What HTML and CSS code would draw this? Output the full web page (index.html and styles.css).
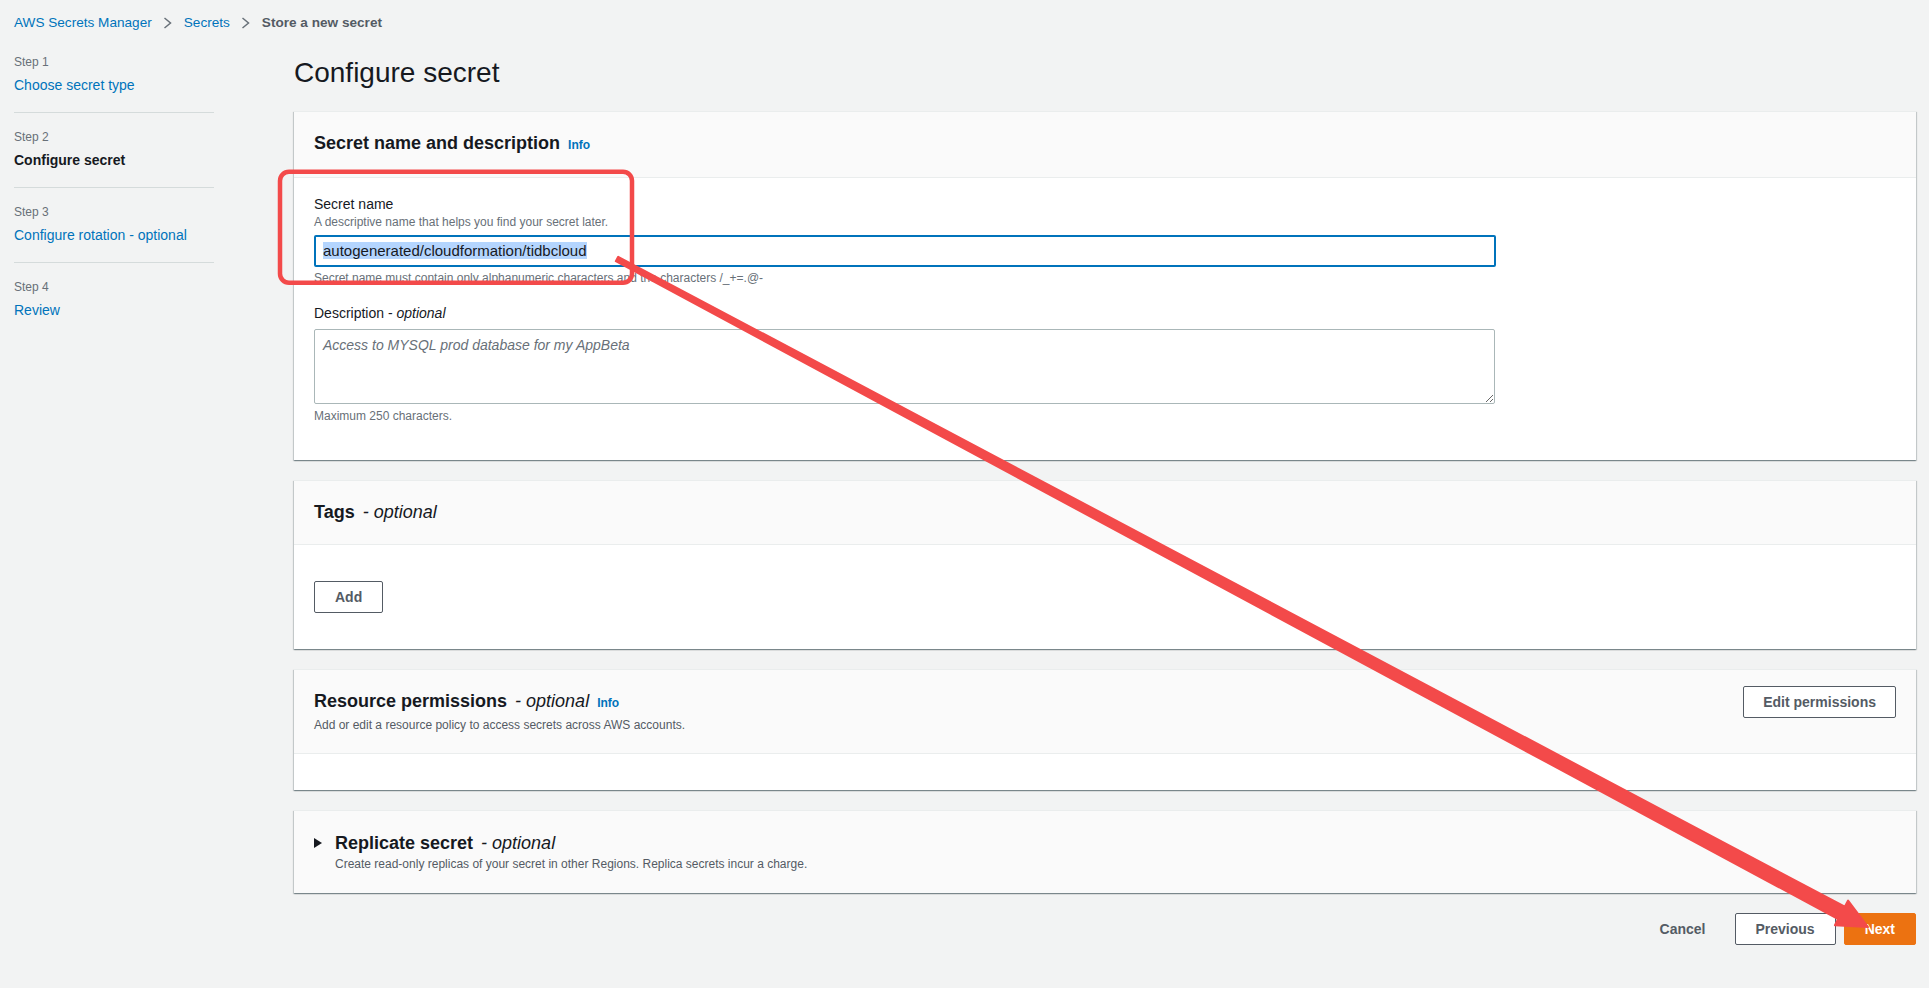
FILE: index.html
```html
<!DOCTYPE html>
<html lang="en">
<head>
  <meta charset="UTF-8">
  <title>Store a new secret</title>
  <link rel="stylesheet" href="styles.css">
</head>
<body>

<nav class="breadcrumbs">
  <a href="#">AWS Secrets Manager</a>
  <svg class="crumb-sep" width="9" height="12" viewBox="0 0 9 12"><path d="M1.5 1 L7.5 6 L1.5 11"/></svg>
  <a href="#">Secrets</a>
  <svg class="crumb-sep" width="9" height="12" viewBox="0 0 9 12"><path d="M1.5 1 L7.5 6 L1.5 11"/></svg>
  <span class="crumb-current">Store a new secret</span>
</nav>

<div class="layout">
  <ol class="steps">
    <li class="step">
      <div class="step-num">Step 1</div>
      <a class="step-title" href="#">Choose secret type</a>
    </li>
    <li class="step">
      <div class="step-num">Step 2</div>
      <span class="step-title current">Configure secret</span>
    </li>
    <li class="step">
      <div class="step-num">Step 3</div>
      <a class="step-title" href="#">Configure rotation - optional</a>
    </li>
    <li class="step">
      <div class="step-num">Step 4</div>
      <a class="step-title" href="#">Review</a>
    </li>
  </ol>

  <main class="content">
    <h1 class="page-title">Configure secret</h1>

    <section class="panel">
      <header class="panel-header">
        <h2 class="panel-title">Secret name and description<a class="info" href="#">Info</a></h2>
      </header>
      <div class="panel-body form-body">
        <div class="field">
          <label class="field-label">Secret name</label>
          <div class="field-desc">A descriptive name that helps you find your secret later.</div>
          <div class="text-input"><span class="selected">autogenerated/cloudformation/tidbcloud</span></div>
          <div class="field-hint">Secret name must contain only alphanumeric characters and the characters /_+=.@-</div>
        </div>
        <div class="field spaced">
          <label class="field-label">Description - <i>optional</i></label>
          <textarea class="textarea" placeholder="Access to MYSQL prod database for my AppBeta"></textarea>
          <div class="field-hint">Maximum 250 characters.</div>
        </div>
      </div>
    </section>

    <section class="panel">
      <header class="panel-header">
        <h2 class="panel-title">Tags<span class="opt">- optional</span></h2>
      </header>
      <div class="panel-body tags-body">
        <button class="btn">Add</button>
      </div>
    </section>

    <section class="panel">
      <header class="panel-header split">
        <div>
          <h2 class="panel-title">Resource permissions<span class="opt">- optional</span><a class="info" href="#">Info</a></h2>
          <div class="panel-sub">Add or edit a resource policy to access secrets across AWS accounts.</div>
        </div>
        <button class="btn header-btn">Edit permissions</button>
      </header>
      <div class="panel-body empty-body"></div>
    </section>

    <section class="panel">
      <header class="panel-header expander">
        <svg class="caret" width="8" height="10" viewBox="0 0 8 10"><path d="M0 0 L8 5 L0 10 Z"/></svg>
        <div>
          <h2 class="panel-title">Replicate secret<span class="opt">- optional</span></h2>
          <div class="panel-sub">Create read-only replicas of your secret in other Regions. Replica secrets incur a charge.</div>
        </div>
      </header>
    </section>

    <div class="actions">
      <button class="btn btn-link">Cancel</button>
      <button class="btn">Previous</button>
      <button class="btn btn-primary">Next</button>
    </div>
  </main>
</div>

<!-- annotation drawn on top of the screenshot -->
<svg class="markup" width="1929" height="988" viewBox="0 0 1929 988">
  <rect x="280" y="171.7" width="352" height="111" rx="9" ry="9" fill="none" stroke="#f34a4a" stroke-width="4.5"/>
  <path d="M618.2 256.8 L1844.8 906.7 L1848.1 900.6 L1868 927 L1834.9 925.2 L1838.2 919.1 L615.8 261.2 Z"
        fill="#f34a4a" stroke="#f34a4a" stroke-width="2" stroke-linejoin="round"/>
</svg>

</body>
</html>
```

FILE: styles.css
```css
* {
  box-sizing: border-box;
}

html, body {
  margin: 0;
  padding: 0;
}

body {
  width: 1929px;
  height: 988px;
  overflow: hidden;
  padding: 0 13px 0 14px;
  background-color: #f2f3f3;
  color: #16191f;
  font-family: "Liberation Sans", Arial, sans-serif;
  font-size: 14px;
  line-height: 20px;
}

a {
  color: #0073bb;
  text-decoration: none;
}

/* breadcrumbs */
.breadcrumbs {
  display: flex;
  align-items: center;
  height: 38px;
  padding: 13px 0 5px;
  font-size: 13.6px;
}

.crumb-sep {
  margin: 0 12px 0 11px;
  fill: none;
  stroke: #687078;
  stroke-width: 1.5;
}

.crumb-current {
  color: #545b64;
  font-weight: bold;
}

.layout {
  display: grid;
  grid-template-columns: 200px 1fr;
  column-gap: 80px;
}

/* wizard steps */
.steps {
  list-style: none;
  margin: 0;
  padding: 0;
}

.step {
  padding: 16px 0 17px;
  border-bottom: 1px solid #d5dbdb;
}

.step:last-child {
  border-bottom: none;
}

.step-num {
  font-size: 12px;
  line-height: 16px;
  color: #687078;
}

.step-title {
  display: block;
  margin-top: 5px;
}

.step-title.current {
  color: #16191f;
  font-weight: bold;
}

/* main column */
.page-title {
  margin: 17px 0 20px;
  font-size: 28px;
  line-height: 36px;
  font-weight: normal;
}

.panel {
  margin-bottom: 20px;
  background-color: #fff;
  border-top: 1px solid #eaeded;
  box-shadow: 0 1px 1px 0 rgba(0, 28, 36, 0.3),
              1px 1px 1px 0 rgba(0, 28, 36, 0.15),
              -1px 1px 1px 0 rgba(0, 28, 36, 0.15);
}

.panel-header {
  padding: 19px 20px 20px;
  background-color: #fafafa;
  border-bottom: 1px solid #eaeded;
}

.panel-header.split {
  display: flex;
  justify-content: space-between;
  align-items: flex-start;
}

.panel-header.expander {
  display: flex;
  align-items: flex-start;
  gap: 13px;
  padding: 20px 20px 21px;
  border-bottom: none;
}

.caret {
  margin-top: 7px;
  fill: #16191f;
}

.panel-title {
  margin: 0;
  font-size: 18px;
  line-height: 24px;
  font-weight: bold;
}

.opt {
  margin-left: 8px;
  font-style: italic;
  font-weight: normal;
}

.info {
  margin-left: 8px;
  font-size: 12px;
  font-weight: bold;
}

.panel-sub {
  margin-top: 2px;
  font-size: 12px;
  line-height: 16px;
  color: #545b64;
}

.expander .panel-sub {
  margin-top: 1px;
}

.panel-body {
  padding: 0 20px;
}

.form-body {
  padding-top: 16px;
  padding-bottom: 36px;
}

.tags-body {
  padding-top: 36px;
  padding-bottom: 36px;
}

.empty-body {
  height: 36px;
}

/* form fields */
.field.spaced {
  margin-top: 17px;
}

.field-label {
  display: block;
}

.field-desc,
.field-hint {
  font-size: 12px;
  line-height: 16px;
  color: #687078;
}

.field-hint {
  margin-top: 3px;
}

.spaced .field-hint {
  margin-top: 4px;
}

.text-input {
  width: 1182px;
  height: 32px;
  margin-top: 5px;
  padding: 0 7px;
  border: 2px solid #0073bb;
  border-radius: 2px;
  background-color: #fff;
  font-size: 15px;
  line-height: 28px;
}

.selected {
  background-color: #b4d5fe;
}

.textarea {
  display: block;
  width: 1181px;
  height: 75px;
  margin: 6px 0 0;
  padding: 5px 8px;
  border: 1px solid #aab7b8;
  border-radius: 2px;
  font-family: "Liberation Sans", Arial, sans-serif;
  font-size: 14px;
  line-height: 20px;
  resize: vertical;
}

.textarea::placeholder {
  color: #687078;
  font-style: italic;
  opacity: 1;
}

/* buttons */
.btn {
  padding: 4px 20px;
  border: 1px solid #545b64;
  border-radius: 2px;
  background-color: #fff;
  color: #545b64;
  font-family: "Liberation Sans", Arial, sans-serif;
  font-size: 14px;
  line-height: 22px;
  font-weight: bold;
  cursor: pointer;
}

.header-btn {
  margin-top: -3px;
  padding: 4px 19px;
}

.btn-link {
  border-color: transparent;
  background-color: transparent;
}

.btn-primary {
  border-color: #ec7211;
  background-color: #ec7211;
  color: #fff;
}

.actions {
  display: flex;
  justify-content: flex-end;
  gap: 8px;
}

/* red annotation layer */
.markup {
  position: absolute;
  top: 0;
  left: 0;
  pointer-events: none;
}
```
